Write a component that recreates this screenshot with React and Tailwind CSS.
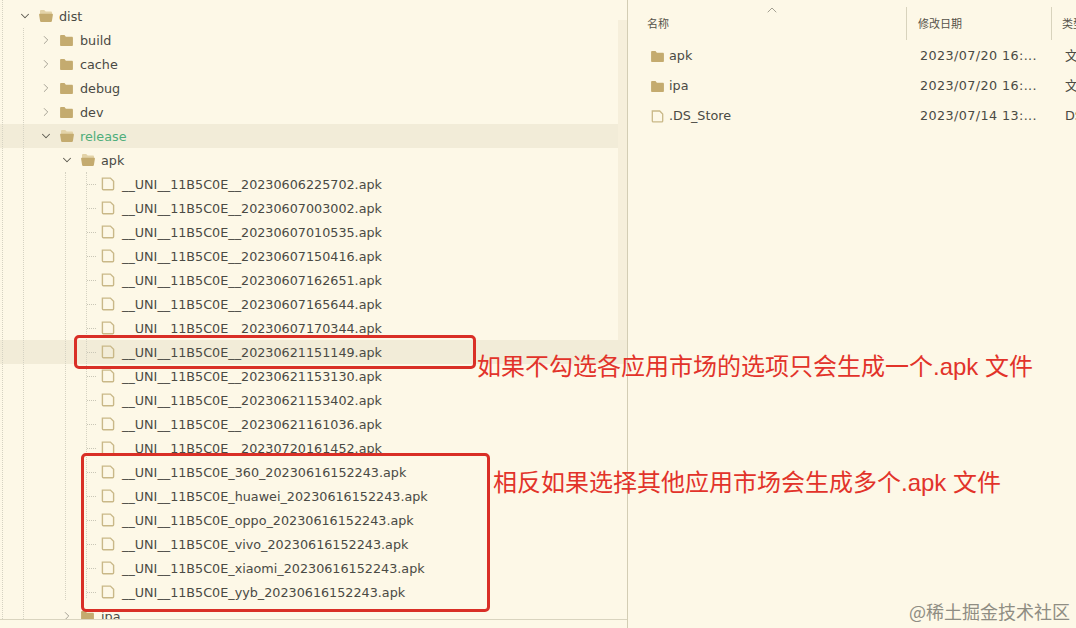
import React from "react";
import { ChevronDown, ChevronRight, ChevronUp } from "lucide-react";

const FolderClosed = ({ className }) => (
  <svg viewBox="0 0 14 12" className={className}>
    <path d="M0 1.2C0 .5.5 0 1.2 0h3.6l1.5 1.8h6.5c.7 0 1.2.5 1.2 1.2v7.8c0 .7-.5 1.2-1.2 1.2H1.2C.5 12 0 11.5 0 10.800z" fill="#c4ab6f" />
  </svg>
);

const FolderOpen = ({ className }) => (
  <svg viewBox="0 0 14 12" className={className}>
    <path d="M1 1.200C1 .5 1.500 0 2.200 0h3l1.500 1.400h5.100c.7 0 1.200.5 1.200 1.200V4H1z" fill="#e3d3a8" />
    <path d="M.1 4.800c-.1-.5.3-1 .8-1h12.200c.5 0 .9.500.8 1l-1 6.300c-.1.500-.5.900-1 .900H2.100c-.5 0-.9-.4-1-.9z" fill="#c4ab6f" />
  </svg>
);

const FileIcon = ({ className }) => (
  <svg viewBox="0 0 14 14" className={className} fill="none" stroke="#c9b888" strokeWidth="1.400">
    <path d="M1.400 1.100h8l3.200 3.200v7.500c0 .6-.4 1-1 1H2.400c-.6 0-1-.4-1-1z" />
  </svg>
);

const fileRows = [
  "__UNI__11B5C0E__20230606225702.apk",
  "__UNI__11B5C0E__20230607003002.apk",
  "__UNI__11B5C0E__20230607010535.apk",
  "__UNI__11B5C0E__20230607150416.apk",
  "__UNI__11B5C0E__20230607162651.apk",
  "__UNI__11B5C0E__20230607165644.apk",
  "__UNI__11B5C0E__20230607170344.apk",
  "__UNI__11B5C0E__20230621151149.apk",
  "__UNI__11B5C0E__20230621153130.apk",
  "__UNI__11B5C0E__20230621153402.apk",
  "__UNI__11B5C0E__20230621161036.apk",
  "__UNI__11B5C0E__20230720161452.apk",
  "__UNI__11B5C0E_360_20230616152243.apk",
  "__UNI__11B5C0E_huawei_20230616152243.apk",
  "__UNI__11B5C0E_oppo_20230616152243.apk",
  "__UNI__11B5C0E_vivo_20230616152243.apk",
  "__UNI__11B5C0E_xiaomi_20230616152243.apk",
  "__UNI__11B5C0E_yyb_20230616152243.apk",
];

const FolderRow = ({ name, indent, open, selected, green }) => (
  <div className={`flex items-center h-6 ${indent} ${selected ? "bg-[#f2ecd8]" : ""}`}>
    {open ? (
      <ChevronDown className="w-[14px] h-[14px] mr-[7px] text-[#5c5a50]" strokeWidth={1.800} />
    ) : (
      <ChevronRight className="w-[14px] h-[14px] mr-[7px] text-[#9a978a]" strokeWidth={1.500} />
    )}
    {open ? <FolderOpen className="w-[14px] h-3 mr-[6px]" /> : <FolderClosed className="w-[13px] h-[11px] mr-[7px]" />}
    <span className={`pt-[2px] ${green ? "text-[#4fae7b]" : "text-[#4a4a44]"}`}>{name}</span>
  </div>
);

const FileRow = ({ name, selected }) => (
  <div className={`flex items-center h-6 ${selected ? "bg-[#f2ecd8]" : ""}`}>
    <div className="ml-[87px] w-[9px] border-t border-dotted border-[#c9c6b6]" />
    <FileIcon className="w-[14px] h-[14px] ml-[5px] mr-[7px]" />
    <span className="pt-[2px] text-[#4a4a44] whitespace-nowrap">{name}</span>
  </div>
);

const ListRow = ({ icon, name, date, type }) => (
  <div className="flex items-center h-[30px] text-[#4a4a44]">
    <div className="w-[278px] shrink-0 flex items-center pl-[23px]">
      {icon}
      <span>{name}</span>
    </div>
    <div className="w-[145px] shrink-0 pl-[14px] whitespace-nowrap tracking-[0.4px]">{date}</div>
    <div className="pl-[14px] whitespace-nowrap">{type}</div>
  </div>
);

const App = () => {
  return (
    <div className="relative w-[1076px] h-[628px] overflow-hidden bg-[#fdf8e7] flex text-[12.75px] font-['DejaVu_Sans','Noto_Sans_CJK_SC',sans-serif]">
      {/* tree */}
      <div className="relative w-[628px] h-full shrink-0 border-r border-[#d3cdb4]">
        <div className="h-[620px] overflow-hidden border-b border-[#d9d4bf] pt-[4px]">
          <FolderRow name="dist" indent="pl-[18px]" open />
          <FolderRow name="build" indent="pl-[39px]" />
          <FolderRow name="cache" indent="pl-[39px]" />
          <FolderRow name="debug" indent="pl-[39px]" />
          <FolderRow name="dev" indent="pl-[39px]" />
          <FolderRow name="release" indent="pl-[39px]" open selected green />
          <FolderRow name="apk" indent="pl-[60px]" open />
          {fileRows.map((name, i) => (
            <FileRow key={name} name={name} selected={i === 7} />
          ))}
          <FolderRow name="ipa" indent="pl-[60px]" />
        </div>
        {/* indent guides */}
        <div className="absolute left-[2px] top-0 h-[619px] border-l border-dotted border-[#d5d2c2]" />
        <div className="absolute left-[23px] top-[28px] h-[591px] border-l border-dotted border-[#d5d2c2]" />
        <div className="absolute left-[65px] top-[172px] h-[428px] border-l border-dotted border-[#d5d2c2]" />
        <div className="absolute left-[86px] top-[172px] h-[426px] border-l border-dotted border-[#d5d2c2]" />
        {/* scrollbar */}
        <div className="absolute right-0 top-[20px] w-[9px] h-[320px] bg-[#f6efdb]" />
      </div>

      {/* file list */}
      <div className="relative flex-1 min-w-0">
        <ChevronUp className="absolute left-[136px] top-[2px] w-4 h-4 text-[#8d8a7c]" strokeWidth={1.200} />
        <div className="flex h-[41px] pt-[7px] text-[11px] text-[#55534a]">
          <div className="w-[279px] shrink-0 h-[33px] pl-[19px] pt-[3px] flex items-center border-r border-[#d8d3bd]">名称</div>
          <div className="w-[145px] shrink-0 h-[33px] pl-[11px] pt-[3px] flex items-center border-r border-[#d8d3bd]">修改日期</div>
          <div className="h-[33px] pl-[10px] pt-[3px] flex items-center whitespace-nowrap">类型</div>
        </div>
        <ListRow icon={<FolderClosed className="w-[13px] h-[11px] mr-[5px]" />} name="apk" date="2023/07/20 16:..." type="文" />
        <ListRow icon={<FolderClosed className="w-[13px] h-[11px] mr-[5px]" />} name="ipa" date="2023/07/20 16:..." type="文" />
        <ListRow icon={<FileIcon className="w-[13px] h-[13px] mr-[5px]" />} name=".DS_Store" date="2023/07/14 13:..." type="DS" />
      </div>

      {/* annotations */}
      <div className="absolute left-[74px] top-[335px] w-[402px] h-[34px] border-[3px] border-[#d92f26] rounded-[5px]" />
      <div className="absolute left-[81px] top-[453px] w-[409px] h-[159px] border-[3px] border-[#d92f26] rounded-[5px]" />
      <div className="absolute left-[477px] top-[352px] text-[24px] leading-[30px] text-[#e2332a] whitespace-nowrap font-['Liberation_Sans','Noto_Sans_CJK_SC',sans-serif]">如果不勾选各应用市场的选项只会生成一个.apk 文件</div>
      <div className="absolute left-[493px] top-[468px] text-[24px] leading-[30px] text-[#e2332a] whitespace-nowrap font-['Liberation_Sans','Noto_Sans_CJK_SC',sans-serif]">相反如果选择其他应用市场会生成多个.apk 文件</div>
      <div className="absolute left-[909px] top-[601px] text-[18px] leading-[20px] text-[#8f8d83] whitespace-nowrap font-['Noto_Sans_CJK_SC',serif]">@稀土掘金技术社区</div>
    </div>
  );
};

export default App;
